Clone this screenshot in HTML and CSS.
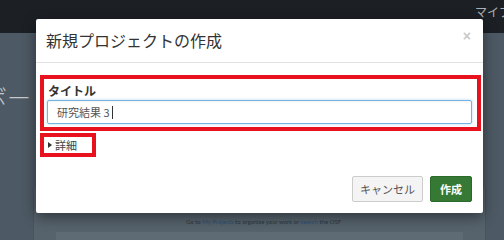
FILE: index.html
```html
<!DOCTYPE html>
<html lang="ja">
<head>
<meta charset="utf-8">
<link rel="stylesheet" href="styles.css">
</head>
<body>
<header class="navbar"><span class="nav-link">マイプロジェクト</span></header>
<main class="page">
  <h1 class="page-title">ボード</h1>
  <section class="panel">
    <p class="panel-text">Go to <span class="link">My Projects</span> to organize your work or <span class="link">search</span> the OSF</p>
    <div class="panel-inner"></div>
  </section>
</main>
<div class="backdrop">
  <div class="modal">
    <div class="modal-header">
      <h2 class="modal-title">新規プロジェクトの作成</h2>
      <span class="close">×</span>
    </div>
    <div class="modal-body">
      <div class="form-group highlight">
        <div class="label">タイトル</div>
        <div class="input">研究結果 3<span class="caret"></span></div>
      </div>
      <div class="details highlight">
        <span class="tri"></span><span class="details-text">詳細</span>
      </div>
    </div>
    <div class="modal-footer">
      <button class="btn btn-default">キャンセル</button>
      <button class="btn btn-success">作成</button>
    </div>
  </div>
</div>
</body>
</html>
```
FILE: styles.css
```css
* { box-sizing: border-box; }
html, body { margin: 0; padding: 0; }
body {
  width: 504px;
  height: 240px;
  overflow: hidden;
  background: #4d5964;
  font-family: "Noto Sans CJK JP", "Noto Sans", sans-serif;
  position: relative;
}
.navbar {
  height: 33px;
  background: #1c2025;
  padding-left: 475px;
  display: flex;
  align-items: flex-start;
  white-space: nowrap;
  overflow: hidden;
}
.nav-link {
  font-size: 12px;
  line-height: 14px;
  margin-top: 5px;
  color: #a9afb4;
}
.page {
  display: flex;
  flex-direction: column;
}
.page-title {
  margin: 47px 0 0 -17px;
  font-size: 24px;
  line-height: 34px;
  font-weight: 300;
  color: #c4c9ce;
  white-space: nowrap;
}
.panel {
  margin: 74px 18px 0 33px;
  height: 52px;
  background: #56626c;
  border-left: 1px solid #48535d;
  border-right: 1px solid #48535d;
  padding-top: 30px;
}
.panel-text {
  margin: 0;
  text-align: center;
  font-family: "Lato", sans-serif;
  font-size: 6px;
  line-height: 8px;
  color: #2d3640;
  padding-left: 8px;
}
.link { color: #2e4f72; }
.panel-inner {
  margin: 6px 22px 0 22px;
  height: 8px;
  background: #5e6a74;
}
.backdrop {
  position: absolute;
  inset: 0;
  padding: 19px 0 0 36px;
}
.modal {
  width: 447px;
  background: #fff;
  border-radius: 2px;
  box-shadow: 0 4px 14px rgba(0,0,0,0.45);
}
.modal-header {
  height: 44px;
  border-bottom: 1px solid #e3e3e3;
  display: flex;
  align-items: center;
  justify-content: space-between;
  padding: 0 12px 0 10px;
}
.modal-title {
  margin: 0;
  font-size: 16px;
  font-weight: 400;
  color: #333;
  line-height: 20px;
  margin-top: -2px;
}
.close {
  font-family: "Liberation Sans", sans-serif;
  font-size: 14px;
  font-weight: 700;
  color: #c9c9c9;
  line-height: 14px;
  align-self: flex-start;
  margin-top: 10px;
}
.modal-body {
  padding: 12px 2px 0 4px;
  display: flex;
  flex-direction: column;
  align-items: flex-start;
}
.highlight {
  border: 4px solid #e8111e;
}
.form-group {
  width: 100%;
  padding: 4px 5px 3px 3px;
  display: flex;
  flex-direction: column;
}
.label {
  font-size: 12px;
  font-weight: 700;
  line-height: 16px;
  height: 16px;
  color: #333;
  margin: 0 0 1px 1px;
}
.input {
  height: 24px;
  border: 1px solid #74b3e6;
  border-radius: 2px;
  box-shadow: inset 0 1px 1px rgba(0,0,0,0.05), 0 0 3px rgba(102,175,233,0.5);
  padding: 0 9px;
  font-size: 11px;
  line-height: 22px;
  color: #555;
  display: flex;
  align-items: center;
}
.caret {
  display: inline-block;
  width: 1px;
  height: 13px;
  background: #333;
  margin-left: 2px;
}
.details {
  margin-top: 2px;
  width: 56px;
  height: 24px;
  padding: 0 0 0 4px;
  display: flex;
  align-items: center;
}
.tri {
  width: 0;
  height: 0;
  border-left: 4px solid #333;
  border-top: 3.5px solid transparent;
  border-bottom: 3.5px solid transparent;
  margin-right: 3px;
}
.details-text {
  font-size: 11px;
  line-height: 14px;
  color: #444;
}
.modal-footer {
  padding: 19px 11px 11px;
  display: flex;
  justify-content: flex-end;
  gap: 7px;
}
.btn {
  height: 26px;
  font-family: "Noto Sans CJK JP", sans-serif;
  font-size: 11px;
  line-height: 24px;
  border-radius: 2px;
  cursor: pointer;
}
.btn-default {
  background: #f4f4f4;
  border: 1px solid #ccc;
  color: #555;
  padding: 0 7px;
}
.btn-success {
  background: #357935;
  border: 1px solid #2c6a2c;
  color: #fff;
  font-weight: 700;
  padding: 0 9px;
}
```
